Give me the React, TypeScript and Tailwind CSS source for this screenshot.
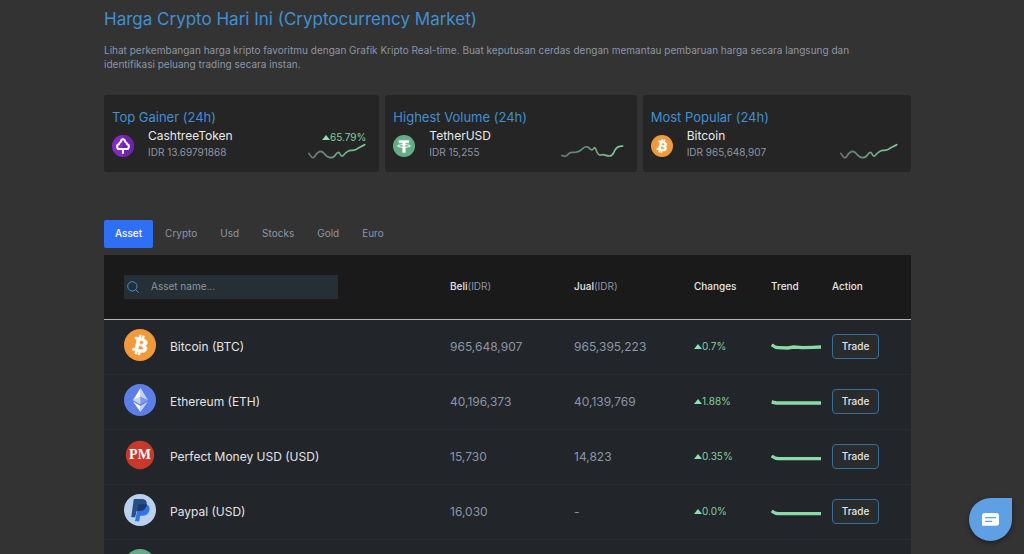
import React from "react";

type IconProps = { className?: string };

function BitcoinIcon({ className }: IconProps) {
  return (
    <svg viewBox="0 0 32 32" className={className} aria-hidden="true">
      <circle cx="16" cy="16" r="16" fill="#f19a3c" />
      <path
        fill="#fff"
        d="M23.189 14.02c.314-2.096-1.283-3.223-3.465-3.975l.708-2.84-1.728-.43-.69 2.765c-.454-.114-.92-.22-1.385-.326l.695-2.783L15.596 6l-.708 2.839c-.376-.086-.746-.17-1.104-.26l.002-.009-2.384-.595-.46 1.846s1.283.294 1.256.312c.7.175.826.638.805 1.006l-.806 3.235c.048.012.11.03.18.057l-.183-.045-1.13 4.532c-.086.212-.303.531-.793.41.018.025-1.256-.313-1.256-.313l-.858 1.978 2.25.561c.418.105.828.215 1.231.318l-.715 2.872 1.727.43.708-2.84c.472.127.93.245 1.378.357l-.706 2.828 1.728.43.715-2.866c2.948.558 5.164.333 6.097-2.333.752-2.146-.037-3.385-1.588-4.192 1.13-.26 1.98-1.003 2.207-2.538zm-3.95 5.538c-.533 2.147-4.148.986-5.32.695l.95-3.805c1.172.293 4.929.872 4.37 3.11zm.535-5.569c-.487 1.953-3.495.96-4.47.717l.86-3.45c.975.243 4.118.696 3.61 2.733z"
        stroke="#fff"
        strokeWidth="0.7"
      />
    </svg>
  );
}

function TetherIcon({ className }: IconProps) {
  return (
    <svg viewBox="0 0 32 32" className={className} aria-hidden="true">
      <circle cx="16" cy="16" r="16" fill="#66ab88" />
      <path
        fill="#fff"
        stroke="#fff"
        strokeWidth="0.6"
        d="M17.922 17.383v-.002c-.11.008-.677.042-1.942.042-1.01 0-1.721-.03-1.971-.042v.003c-3.888-.171-6.79-.848-6.79-1.658 0-.809 2.902-1.486 6.79-1.66v2.644c.254.018.982.061 1.988.061 1.207 0 1.812-.05 1.925-.06v-2.643c3.88.173 6.775.85 6.775 1.658 0 .81-2.895 1.485-6.775 1.657m0-3.59v-2.366h5.414V7.819H8.595v3.608h5.414v2.365c-4.4.202-7.709 1.074-7.709 2.118 0 1.044 3.309 1.915 7.709 2.118v7.582h3.913v-7.584c4.393-.202 7.694-1.073 7.694-2.116 0-1.043-3.301-1.914-7.694-2.117"
      />
    </svg>
  );
}

function CashtreeIcon({ className }: IconProps) {
  return (
    <svg viewBox="0 0 66 66" className={className} aria-hidden="true">
      <circle cx="33" cy="33" r="33" fill="#8629c4" />
      <path d="M33 0a33 33 0 0 1 0 66z" fill="#6f22ac" />
      <path
        d="M28 42h-4a7 7 0 0 1-3-14c0-4 2-6 5-7 1-5 4-8 7-8s6 3 7 8c3 1 5 3 5 7a7 7 0 0 1-3 14h-4"
        fill="none"
        stroke="#fff"
        strokeWidth="6"
        strokeLinecap="round"
        strokeLinejoin="round"
      />
      <path d="M33 42v12" stroke="#fff" strokeWidth="6" strokeLinecap="round" />
      <path d="M27 41h12l-6 7z" fill="#fff" />
    </svg>
  );
}

function EthereumIcon({ className }: IconProps) {
  return (
    <svg viewBox="0 0 32 32" className={className} aria-hidden="true">
      <circle cx="16" cy="16" r="16" fill="#5b7fe6" />
      <path d="M16.5 4v8.9l7.5 3.3z" fill="#c3d3f5" />
      <path d="M16.5 4L9 16.2l7.5-3.3z" fill="#fff" />
      <path d="M16.5 22v6L24 17.6z" fill="#c3d3f5" />
      <path d="M16.5 28v-6L9 17.6z" fill="#fff" />
      <path d="M16.5 20.6l7.5-4.4-7.5-3.3z" fill="#7d9ae6" />
      <path d="M9 16.2l7.5 4.4v-7.7z" fill="#c3d3f5" />
    </svg>
  );
}

function PerfectMoneyIcon({ className }: IconProps) {
  return (
    <svg viewBox="0 0 32 32" className={className} aria-hidden="true">
      <circle cx="16" cy="16" r="14.2" fill="#c8382c" />
      <text
        x="16"
        y="20"
        textAnchor="middle"
        fontFamily="'Liberation Serif', serif"
        fontWeight="700"
        fontSize="14"
        fill="#fff"
      >
        PM
      </text>
    </svg>
  );
}

function PaypalIcon({ className }: IconProps) {
  return (
    <svg viewBox="0 0 96 96" className={className} aria-hidden="true">
      <circle cx="48" cy="48" r="48" fill="#b9d0ee" />
      <path
        d="M43 31h24c8 3 11 10 9 18-2 10-9 16-19 16h-7c-1 0-2 1-2 2l-2 13c0 1-1 2-2 2H33z"
        fill="#2f73e8"
      />
      <path
        d="M31 15h22c12 0 17 7 15 17-2 12-10 19-22 19h-6c-2 0-3 1-3 2l-3 15c0 1-1 2-2 2H24c-1 0-2-1-2-2l7-51c0-1 1-2 2-2z"
        fill="#264f86"
      />
      <path d="M43 31h25c-1 11-9 20-22 20h-6z" fill="#1b3a6b" />
    </svg>
  );
}

function Caret() {
  return (
    <svg viewBox="0 0 8 5" className="h-[5px] w-2 shrink-0" aria-hidden="true">
      <path d="M4 0l4 5H0z" fill="#8fe0aa" />
    </svg>
  );
}

const WAVE =
  "M2 31L10 41Q15 48 21 39Q29 25 39 25C50 26 51 44 68 44C84 45 82 28 91 28C97 28 98 44 105 38Q118 22 130 22C149 24 148 14 157 12L170 5";
const STEPS =
  "M2 37L12 40C22 38 21 28 33 28C48 29 54 27 62 19C70 11 76 8 83 14C91 22 93 23 99 15C105 8 106 39 119 36C129 32 132 39 145 39C162 41 155 13 177 10L185 9";

function Sparkline({ d, width, id }: { d: string; width: number; id: string }) {
  return (
    <svg
      viewBox={`0 0 ${width * 3} 51`}
      width={width}
      height={17}
      fill="none"
      className="shrink-0"
      aria-hidden="true"
    >
      <defs>
        <linearGradient id={id} x1="0" x2="1" y1="0" y2="0">
          <stop offset="0" stopColor="#6b7078" />
          <stop offset="0.35" stopColor="#67927a" />
          <stop offset="1" stopColor="#7fcf9c" />
        </linearGradient>
      </defs>
      <path d={d} stroke={`url(#${id})`} strokeWidth="5" strokeLinecap="round" />
    </svg>
  );
}

const cards = [
  {
    id: "gainer",
    title: "Top Gainer (24h)",
    name: "CashtreeToken",
    price: "IDR 13.69791868",
    change: "65.79%",
    Icon: CashtreeIcon,
    d: WAVE,
    width: 58,
  },
  {
    id: "volume",
    title: "Highest Volume (24h)",
    name: "TetherUSD",
    price: "IDR 15,255",
    change: "",
    Icon: TetherIcon,
    d: STEPS,
    width: 63,
  },
  {
    id: "popular",
    title: "Most Popular (24h)",
    name: "Bitcoin",
    price: "IDR 965,648,907",
    change: "",
    Icon: BitcoinIcon,
    d: WAVE,
    width: 58,
  },
];

const rows = [
  { name: "Bitcoin (BTC)", buy: "965,648,907", sell: "965,395,223", change: "0.7%", Icon: BitcoinIcon, d: "M2 5Q12 14 22 14L50 15L68 12L95 14L125 13L150 12" },
  { name: "Ethereum (ETH)", buy: "40,196,373", sell: "40,139,769", change: "1.88%", Icon: EthereumIcon, d: "M2 12L16 15L150 15" },
  { name: "Perfect Money USD (USD)", buy: "15,730", sell: "14,823", change: "0.35%", Icon: PerfectMoneyIcon, d: "M2 9Q12 17 22 17L150 17" },
  { name: "Paypal (USD)", buy: "16,030", sell: "-", change: "0.0%", Icon: PaypalIcon, d: "M2 9Q12 17 22 17L150 17" },
];

const tabs = ["Asset", "Crypto", "Usd", "Stocks", "Gold", "Euro"];

export default function App() {
  const [active, setActive] = React.useState("Asset");
  return (
    <div className="h-screen overflow-hidden bg-[#333333] font-['Inter','Liberation_Sans',sans-serif] text-[#8d95a6]">
      <main className="pr-[113px] pl-[104px]">
        <h1 className="pt-[7px] text-[17px] leading-6 text-[#428fd3]">
          Harga Crypto Hari Ini (Cryptocurrency Market)
        </h1>
        <p className="mt-3 pr-8 text-[10px] leading-[14px]">
          Lihat perkembangan harga kripto favoritmu dengan Grafik Kripto Real-time. Buat keputusan
          cerdas dengan memantau pembaruan harga secara langsung dan identifikasi peluang trading
          secara instan.
        </p>

        <section className="mt-6 grid grid-cols-[275fr_251fr_268fr] gap-1.5">
          {cards.map(({ id, title, name, price, change, Icon, d, width }) => (
            <article key={id} className="rounded-[3px] bg-[#252525] pt-[14px] pr-[13px] pb-3 pl-2">
              <h2 className="text-[13px] leading-4 text-[#428fd3]">{title}</h2>
              <div className="flex h-[35px] items-center">
                <Icon className="mt-[6px] size-[22px] shrink-0" />
                <div className="ml-[14px] flex-1 self-start pt-[3px]">
                  <div className="text-[12px] leading-4 text-[#e9eaec]">{name}</div>
                  <div className="text-[10px] leading-4">{price}</div>
                </div>
                <div className="flex flex-col items-end self-end">
                  {change && (
                    <div className="flex items-center text-[10px] leading-3 text-[#84cf9e]">
                      <Caret />
                      {change}
                    </div>
                  )}
                  <Sparkline d={d} width={width} id={id} />
                </div>
              </div>
            </article>
          ))}
        </section>

        <nav className="mt-12 flex gap-px">
          {tabs.map((tab) => (
            <button
              key={tab}
              type="button"
              onClick={() => setActive(tab)}
              className={
                tab === active
                  ? "h-7 rounded-[2px] bg-[#2f6ff5] px-[11px] pb-px text-[10px] font-medium text-white"
                  : "h-7 px-[11px] pb-px text-[10px]"
              }
            >
              {tab}
            </button>
          ))}
        </nav>

        <table className="mt-[7px] w-full table-fixed border-collapse text-left">
          <colgroup>
            <col />
            <col className="w-[124px]" />
            <col className="w-[120px]" />
            <col className="w-[77px]" />
            <col className="w-[61px]" />
            <col className="w-[79px]" />
          </colgroup>
          <thead className="bg-[#1a1a1a] text-[10px] text-[#e3e4e6]">
            <tr className="h-16 border-b border-[#b4b4b4]">
              <th className="pl-5 font-normal">
                <label className="flex h-6 w-[214px] items-center bg-[#262f36] pl-[3px]">
                  <svg viewBox="0 0 36 36" className="size-3 shrink-0" fill="none" aria-hidden="true">
                    <circle cx="16" cy="16" r="14" stroke="#428fd3" strokeWidth="3" />
                    <path d="M26 26l9 9" stroke="#428fd3" strokeWidth="3" />
                  </svg>
                  <input
                    type="text"
                    aria-label="Asset name"
                    placeholder="Asset name..."
                    className="ml-3 w-full bg-transparent text-[10px] outline-none placeholder:text-[#8f9499]"
                  />
                </label>
              </th>
              <th className="font-medium">
                Beli<span className="font-normal text-[#8d95a6]">(IDR)</span>
              </th>
              <th className="font-medium">
                Jual<span className="font-normal text-[#8d95a6]">(IDR)</span>
              </th>
              <th className="font-medium">Changes</th>
              <th className="font-medium">Trend</th>
              <th className="font-medium">Action</th>
            </tr>
          </thead>
          <tbody className="bg-[#22252a]">
            {rows.map(({ name, buy, sell, change, Icon, d }) => (
              <tr key={name} className="h-[55px] border-b border-[#282b30]">
                <td className="pl-5">
                  <div className="flex items-center gap-[14px] text-[12px] text-[#e3e4e6]">
                    <Icon className="mb-[3px] size-8 shrink-0" />
                    {name}
                  </div>
                </td>
                <td className="text-[12px]">{buy}</td>
                <td className="text-[12px]">{sell}</td>
                <td>
                  <div className="flex items-center text-[10px] text-[#84cf9e]">
                    <Caret />
                    {change}
                  </div>
                </td>
                <td>
                  <svg viewBox="0 0 153 24" width={51} height={8} fill="none" aria-hidden="true">
                    <path d={d} stroke="#8adba5" strokeWidth="10" />
                  </svg>
                </td>
                <td>
                  <button
                    type="button"
                    className="block h-[25px] w-[47px] rounded-[4px] border border-[#35709f] bg-[#2a2b2d] text-[10px] font-medium text-[#e3e4e6]"
                  >
                    Trade
                  </button>
                </td>
              </tr>
            ))}
            <tr className="h-[55px]">
              <td className="pl-5" colSpan={6}>
                <TetherIcon className="mb-[3px] size-8" />
              </td>
            </tr>
          </tbody>
        </table>
      </main>

      <button
        type="button"
        aria-label="Chat"
        className="fixed right-3 bottom-[13px] flex size-[43px] items-center justify-center rounded-full rounded-tr-[5px] bg-[#5f9fe3] shadow-[0_2px_5px_rgba(0,0,0,0.4)]"
      >
        <svg viewBox="0 0 51 39" className="h-[13px] w-[17px]" aria-hidden="true">
          <path
            d="M8 0h35q8 0 8 8v22q0 8-8 8H2q-2 0-2-2V8q0-8 8-8z"
            fill="#fff"
          />
          <path d="M9 14h33M9 25h21" stroke="#5f9fe3" strokeWidth="4" />
        </svg>
      </button>
    </div>
  );
}
